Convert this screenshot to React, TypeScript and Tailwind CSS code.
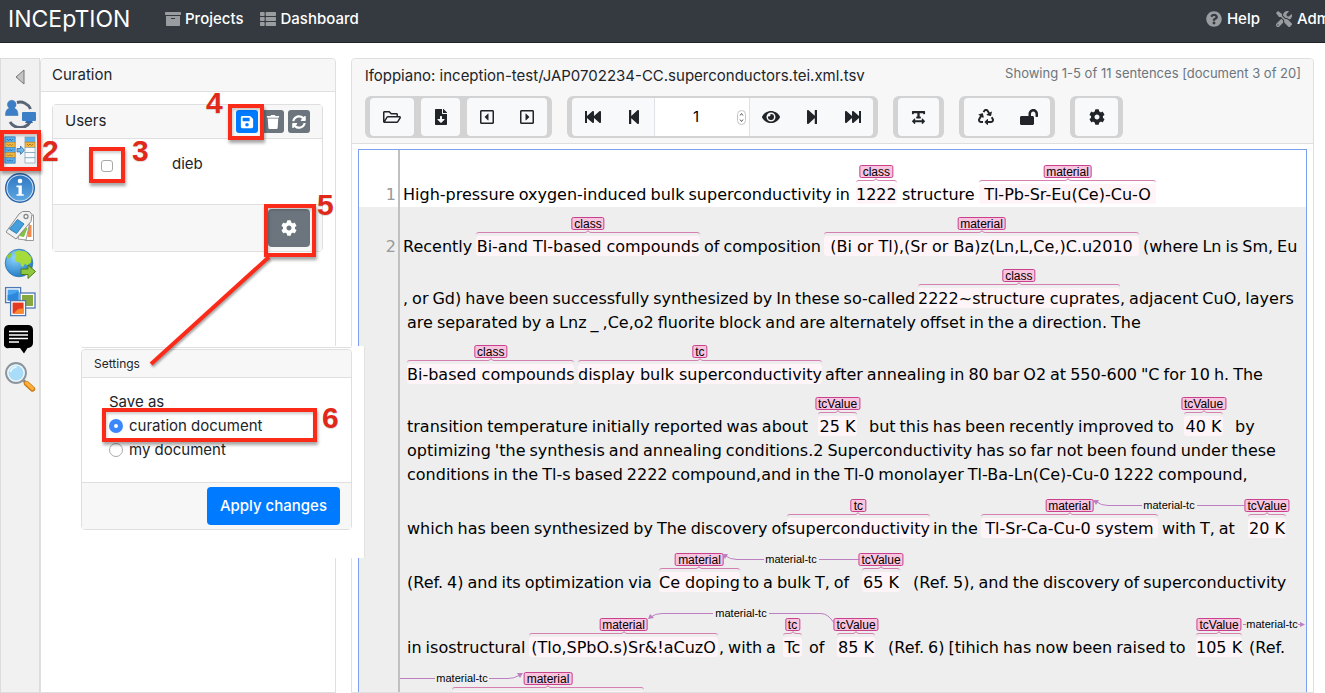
import React from 'react';
import {
  FaArchive, FaThList, FaQuestionCircle, FaTools, FaSave, FaTrash, FaSyncAlt, FaCog,
  FaRegFolderOpen, FaFileDownload, FaRegCaretSquareLeft, FaRegCaretSquareRight,
  FaFastBackward, FaStepBackward, FaEye, FaStepForward, FaFastForward,
  FaTextWidth, FaRecycle, FaLockOpen,
} from 'react-icons/fa';

/* ---------- annotated document ---------- */

type Segment = { x: number; text: string; tag?: string; width?: number };
type Arc = { line: string; head: string; labelX: number; y: number };
type Line = { height: number; number?: string; plain?: boolean; segments: Segment[]; arcs?: Arc[] };

const LINES: Line[] = [
  {
    height: 57, number: '1', plain: true,
    segments: [
      { x: 3, text: 'High-pressure oxygen-induced bulk superconductivity in' },
      { x: 456, text: '1222', tag: 'class' },
      { x: 502, text: 'structure' },
      { x: 579, text: 'Tl-Pb-Sr-Eu(Ce)-Cu-O', tag: 'material', width: 177 },
    ],
  },
  {
    height: 52, number: '2',
    segments: [
      { x: 3, text: 'Recently' },
      { x: 76, text: 'Bi-and Tl-based compounds', tag: 'class', width: 224 },
      { x: 304, text: 'of composition' },
      { x: 424, text: '(Bi or Tl),(Sr or Ba)z(Ln,L,Ce,)C.u2010', tag: 'material', width: 315 },
      { x: 743, text: '(where Ln is Sm, Eu' },
    ],
  },
  {
    height: 52,
    segments: [
      { x: 3, text: ', or Gd) have been successfully synthesized by In these so-called' },
      { x: 518, text: '2222~structure cuprates', tag: 'class' },
      { x: 720, text: ', adjacent CuO, layers' },
    ],
  },
  {
    height: 24,
    segments: [{ x: 7, text: 'are separated by a Lnz _ ,Ce,o2 fluorite block and are alternately offset in the a direction. The' }],
  },
  {
    height: 52,
    segments: [
      { x: 7, text: 'Bi-based compounds', tag: 'class' },
      { x: 178, text: 'display bulk superconductivity', tag: 'tc' },
      { x: 425, text: 'after annealing in 80 bar O2 at 550-600 "C for 10 h. The' },
    ],
  },
  {
    height: 52,
    segments: [
      { x: 7, text: 'transition temperature initially reported was about' },
      { x: 418, text: '25 K', tag: 'tcValue', width: 39 },
      { x: 469, text: 'but this has been recently improved to' },
      { x: 784, text: '40 K', tag: 'tcValue', width: 39 },
      { x: 835, text: 'by' },
    ],
  },
  {
    height: 24,
    segments: [{ x: 7, text: "optimizing 'the synthesis and annealing conditions.2 Superconductivity has so far not been found under these" }],
  },
  {
    height: 24,
    segments: [{ x: 7, text: 'conditions in the Tl-s based 2222 compound,and in the Tl-0 monolayer Tl-Ba-Ln(Ce)-Cu-0 1222 compound,' }],
  },
  {
    height: 54,
    segments: [
      { x: 7, text: 'which has been synthesized by The discovery of' },
      { x: 387, text: 'superconductivity', tag: 'tc' },
      { x: 533, text: 'in the' },
      { x: 581, text: 'Tl-Sr-Ca-Cu-0 system', tag: 'material', width: 177 },
      { x: 762, text: 'with T, at' },
      { x: 848, text: '20 K', tag: 'tcValue', width: 38 },
    ],
    arcs: [{ line: 'M845 18.5H797M742 18.5H708Q701 18.5 696 14.5', head: 'M693 13l6 0-3 5z', labelX: 769, y: 22 }],
  },
  {
    height: 54,
    segments: [
      { x: 7, text: '(Ref. 4) and its optimization via' },
      { x: 259, text: 'Ce doping', tag: 'material' },
      { x: 343, text: 'to a bulk T, of' },
      { x: 462, text: '65 K', tag: 'tcValue', width: 38 },
      { x: 513, text: '(Ref. 5), and the discovery of superconductivity' },
    ],
    arcs: [{ line: 'M460 18.5H419M364 18.5H337Q330 18.5 325 14.5', head: 'M322 13l6 0-3 5z', labelX: 391, y: 22 }],
  },
  {
    height: 65,
    segments: [
      { x: 7, text: 'in isostructural' },
      { x: 129, text: '(Tlo,SPbO.s)Sr&!aCuzO', tag: 'material', width: 189 },
      { x: 319, text: ', with a' },
      { x: 383, text: 'Tc', tag: 'tc', width: 19 },
      { x: 409, text: 'of' },
      { x: 437, text: '85 K', tag: 'tcValue', width: 38 },
      { x: 488, text: '(Ref. 6) [tihich has now been raised to' },
      { x: 796, text: '105 K', tag: 'tcValue' },
      { x: 849, text: '(Ref.' },
    ],
    arcs: [
      { line: 'M434 28Q428 18.5 421 18.5H369M313 18.5H262Q255 18.5 251 22', head: 'M248 24l2-5 4 4z', labelX: 341, y: 22 },
      { line: 'M843 29.5H846M898 29.5H900', head: 'M900 27l5 2.5-5 2.5z', labelX: 872, y: 33 },
    ],
  },
  {
    height: 54,
    segments: [{ x: 52, text: '', tag: 'material', width: 192 }],
    arcs: [{ line: 'M0 18.5H35M89 18.5H108Q114 18.5 119 15.5', head: 'M123 13l-6 0 3 5z', labelX: 62, y: 22 }],
  },
];

function Brace() {
  return (
    <span className="absolute inset-x-0 -top-[3px] flex h-[3px]">
      <span className="flex-1 rounded-tl-[3px] border-t border-[#d77fb0]" />
      <svg width="6" height="3" viewBox="0 0 6 3" className="-mt-[2px] shrink-0 overflow-visible" fill="none" stroke="#d77fb0">
        <path d="M0 2.5Q2.6 2.3 3 .5Q3.4 2.3 6 2.5" />
      </svg>
      <span className="flex-1 rounded-tr-[3px] border-t border-[#d77fb0]" />
    </span>
  );
}

function Annotation({ segment }: { segment: Segment }) {
  return (
    <span className="relative inline-block h-6 whitespace-nowrap text-center" style={segment.width ? { width: segment.width } : undefined}>
      <span className="absolute inset-x-0 top-px h-5 rounded-[3px] bg-[#fff4f8]" />
      <Brace />
      <span className="absolute -top-[18px] left-1/2 flex h-[13px] -translate-x-1/2 items-center rounded-[2px] border border-[#c9408c] bg-[#f9c4de] px-[2px] font-['Liberation_Sans',sans-serif] text-[12px] leading-none text-black">
        {segment.tag}
      </span>
      <span className="relative">{segment.text}</span>
    </span>
  );
}

function DocumentLine({ line }: { line: Line }) {
  return (
    <div className={line.plain ? 'flex bg-white' : 'flex bg-[#eeeeee]'} style={{ height: line.height }}>
      <div className="flex w-[41px] shrink-0 items-end justify-end border-r-2 border-[#c0c0c0] pr-[2px] leading-6 text-[#999999]">
        {line.number}
      </div>
      <div className="relative flex flex-1 items-end whitespace-nowrap leading-6" style={{ paddingLeft: line.segments[0].x }}>
        {line.segments.map((s, i) => {
          const next = line.segments[i + 1];
          return (
            <div key={i} className="flex h-6 shrink-0 gap-1" style={next ? { width: next.x - s.x } : undefined}>
              {s.tag ? <Annotation segment={s} /> : s.text.split(' ').map((w, j) => <span key={j}>{w + ' '}</span>)}
            </div>
          );
        })}
        {line.arcs && (
          <svg className="absolute inset-0 h-full w-full overflow-visible">
            {line.arcs.map((a, i) => (
              <g key={i}>
                <path d={a.line} fill="none" stroke="#bb7fc2" />
                <path d={a.head} fill="#bb7fc2" />
                <text x={a.labelX} y={a.y} textAnchor="middle" className="font-['Liberation_Sans',sans-serif] text-[11px]" fill="#000">
                  material-tc
                </text>
              </g>
            ))}
          </svg>
        )}
      </div>
    </div>
  );
}

/* ---------- side bar icons ---------- */

const svgProps = { width: 32, height: 32, viewBox: '0 0 32 32' };

const UsersIcon = () => (
  <svg {...svgProps}>
    <path d="M13 6.500A11.500 11.500 0 0 1 26.500 13M26.500 25.500A12 12 0 0 1 6 26" fill="none" stroke="#596575" strokeWidth="3" />
    <path d="M1.500 19.500c0-5 1.500-6.500 4-7.300a4.300 4.300 0 1 1 4.500 0c2.500.8 4 2.300 4 7.300z" fill="#3d7fc6" stroke="#2f69a8" strokeWidth=".5" />
    <rect x="18" y="16" width="14" height="9" rx="1" fill="#3d7fc6" />
    <path d="M22 25h6l1 2h-8z" fill="#2f69a8" />
  </svg>
);

const CurationIcon = () => (
  <svg {...svgProps}>
    <rect x="1" y="3" width="10" height="26" fill="#fff" stroke="#4e8fc4" />
    {[3, 8.2, 13.400, 18.600, 23.800].map((y, i) => (
      <g key={i}>
        <rect x="1" y={y} width="10" height="5.200" fill={i % 2 ? '#f3b63f' : '#5bb0ee'} stroke={i % 2 ? '#b8862b' : '#3b7fb8'} strokeWidth=".6" />
        <path d={`M3 ${y + 2}l1.500 1.500 1.500-1.500 1.500 1.500 1.500-1.500`} fill="none" stroke={i % 2 ? '#936c22' : '#1f5f99'} strokeWidth=".8" />
      </g>
    ))}
    <path d="M13 14.500h3.500v-2.500l4 4.200-4 4.200v-2.500H13z" fill="#6db7ea" stroke="#2f6da6" strokeWidth=".8" />
    {[3, 8.2, 13.400, 18.600, 23.800].map((y, i) => (
      <rect key={i} x="21" y={y} width="10" height="5.200" fill={i === 0 ? '#5bb0ee' : i === 1 ? '#f3b63f' : '#f7fbff'} stroke={i === 1 ? '#b8862b' : '#7ea0b8'} strokeWidth=".7" />
    ))}
    <path d="M23 10l1.500 1.500 1.500-1.500 1.500 1.500 1.500-1.500" fill="none" stroke="#936c22" strokeWidth=".8" />
  </svg>
);

const InfoIcon = () => (
  <svg {...svgProps}>
    <defs>
      <linearGradient id="info" x1="0" y1="0" x2="0" y2="1">
        <stop offset="0" stopColor="#2f78c2" />
        <stop offset="1" stopColor="#5ea6e2" />
      </linearGradient>
    </defs>
    <circle cx="16" cy="16" r="14.300" fill="#dceaf7" stroke="#2461a6" strokeWidth="1.400" />
    <circle cx="16" cy="16" r="12.600" fill="url(#info)" />
    <circle cx="16" cy="9" r="2.300" fill="#fff" />
    <path d="M12.500 13.500h5.300v8.700h2v1.600h-7.300v-1.600h2v-7h-2z" fill="#fff" />
  </svg>
);

const TagsIcon = () => (
  <svg {...svgProps}>
    <path d="M23 5h6.500v25.500H21z" fill="#fff" stroke="#999" />
    <path d="M24.500 15h3v12h-4z" fill="#f28a4a" />
    <path d="M20 5l7 2-5 23-8-1z" fill="#fff" stroke="#999" />
    <path d="M18 17l5.500 1-3.500 9-5-1z" fill="#7fc242" />
    <path d="M18.500 1.500h7l2.500 3-1 7L12 29 2 22 15 4z" fill="#f0f0f0" stroke="#8c8c8c" strokeLinejoin="round" />
    <path d="M13.500 9.500l6.500 4.500-7.500 9.500-7-4.500z" fill="#43a0dc" stroke="#2e7fb6" />
    <circle cx="22" cy="6.500" r="2" fill="#fff" stroke="#888" strokeWidth="1.300" />
  </svg>
);

const GlobeIcon = () => (
  <svg {...svgProps}>
    <defs>
      <radialGradient id="globe" cx=".35" cy=".3" r=".8">
        <stop offset="0" stopColor="#8fd6ff" />
        <stop offset="1" stopColor="#1871bf" />
      </radialGradient>
    </defs>
    <circle cx="15" cy="15" r="13.800" fill="url(#globe)" stroke="#2a72ab" strokeWidth=".8" />
    <path d="M10 5l4-2.500 8 1 5.500 6-.5 5-4 3-2-2-2 3.500-2-1.500-1-3-4-1-1.500-3.500 2-2z" fill="#a5dc3c" />
    <path d="M3 8l3-3 2 1-2 4-3 1z" fill="#8ccc30" />
    <path d="M17 21h7v-4l7.500 6.500L24 30.500v-4h-7z" fill="#8fc73e" stroke="#4c7d15" />
  </svg>
);

const ImagesIcon = () => (
  <svg {...svgProps}>
    <g strokeWidth="1.300" stroke="#4d78b3" fill="#fff">
      <rect x="1.600" y="1.600" width="15" height="15" />
      <rect x="16" y="7" width="15" height="15" />
    </g>
    <rect x="3.600" y="3.600" width="11" height="11" fill="#4aa3ee" />
    <path d="M3.600 9q6 0 11-4v9.600h-11z" fill="#2d87dc" />
    <rect x="18" y="9" width="11" height="11" fill="#86a83c" />
    <rect x="6.600" y="14.600" width="15" height="15" fill="#fff" stroke="#4d78b3" strokeWidth="1.300" />
    <rect x="8.600" y="16.600" width="11" height="11" fill="#e53a22" />
    <path d="M10 27.600q3-6 9.600-5v5z" fill="#fb8a2c" />
  </svg>
);

const CommentIcon = () => (
  <svg {...svgProps}>
    <path d="M4.500 1h20a5 5 0 0 1 4.500 5v13a5 5 0 0 1-5 5h-.5l-3.500 5.500-4-5.500H5a4 4 0 0 1-5-5V6a5 5 0 0 1 4.500-5z" fill="#000" />
    <path d="M5 7.500h19M5 11h19M5 14.500h19M5 18h10" stroke="#fff" strokeWidth="1.500" />
  </svg>
);

const SearchIcon = () => (
  <svg {...svgProps} viewBox="0 1 32 32">
    <path d="M19.500 19.500l3 3" stroke="#8a8a8a" strokeWidth="3" />
    <path d="M22.500 22.500l6 5.500" stroke="#c97a12" strokeWidth="5.400" strokeLinecap="round" />
    <path d="M22.500 22l6 5.500" stroke="#fbb03c" strokeWidth="3.200" strokeLinecap="round" />
    <circle cx="12" cy="12" r="9.800" fill="#a9dcf8" stroke="#8c959c" strokeWidth="2.200" />
    <circle cx="12" cy="12" r="8.200" fill="none" stroke="#f4f8fb" strokeWidth="1.300" />
    <path d="M6.500 11a6 6 0 0 1 6-5" fill="none" stroke="#e8f7ff" strokeWidth="2" />
  </svg>
);

const SIDE_ICONS: [string, React.FC][] = [
  ['Users', UsersIcon], ['Curation', CurationIcon], ['Info', InfoIcon], ['Layers', TagsIcon],
  ['Export', GlobeIcon], ['Images', ImagesIcon], ['Comments', CommentIcon], ['Search', SearchIcon],
];

/* ---------- toolbar ---------- */

function ToolGroup({ children }: { children: React.ReactNode }) {
  return <div className="flex h-[42px] gap-[7px] rounded-md bg-[#d3d3d3] px-[5px] py-[2px]">{children}</div>;
}

function ToolSet({ children }: { children: React.ReactNode }) {
  return <div className="flex overflow-hidden rounded bg-[#f8f9fa]">{children}</div>;
}

function Tool({ label, width = 'w-[41px]', children }: { label: string; width?: string; children: React.ReactNode }) {
  return (
    <button type="button" aria-label={label} className={`flex ${width} items-center justify-center text-[16px] text-[#212529]`}>
      {children}
    </button>
  );
}

function Toolbar() {
  return (
    <div className="mt-2 flex gap-[15px]">
      <ToolGroup>
        <ToolSet><Tool label="Open document" width="w-11"><FaRegFolderOpen size={18} /></Tool></ToolSet>
        <ToolSet><Tool label="Export" width="w-[39px]"><FaFileDownload /></Tool></ToolSet>
        <ToolSet>
          <Tool label="Previous document" width="w-10"><FaRegCaretSquareLeft /></Tool>
          <Tool label="Next document" width="w-10"><FaRegCaretSquareRight /></Tool>
        </ToolSet>
      </ToolGroup>
      <ToolGroup>
        <ToolSet>
          <Tool label="First"><FaFastBackward /></Tool>
          <Tool label="Previous"><FaStepBackward /></Tool>
          <div className="flex w-[96px] items-center border-x border-[#dee2e6] bg-white">
            <input aria-label="Sentence" defaultValue="1" className="w-[82px] bg-transparent text-center text-[15px] text-black outline-none" />
            <svg width="9" height="15" viewBox="0 0 9 15" fill="none" stroke="#555">
              <rect x=".5" y=".5" width="8" height="14" rx="4" stroke="#c4c4c4" />
              <path d="M3 5.500L4.500 3.500 6 5.500M3 9.500L4.500 11.500 6 9.500" />
            </svg>
          </div>
          <Tool label="Show"><FaEye size={18} /></Tool>
          <Tool label="Next"><FaStepForward /></Tool>
          <Tool label="Last"><FaFastForward /></Tool>
        </ToolSet>
      </ToolGroup>
      <ToolGroup><ToolSet><Tool label="Text direction"><FaTextWidth size={15} /></Tool></ToolSet></ToolGroup>
      <ToolGroup>
        <ToolSet>
          <Tool label="Reset" width="w-[43px]"><FaRecycle /></Tool>
          <Tool label="Unlock" width="w-[43px]"><FaLockOpen size={18} /></Tool>
        </ToolSet>
      </ToolGroup>
      <ToolGroup><ToolSet><Tool label="Preferences" width="w-[43px]"><FaCog /></Tool></ToolSet></ToolGroup>
    </div>
  );
}

/* ---------- panels ---------- */

function CurationPanel() {
  return (
    <section className="w-[296px] shrink-0 rounded-t border border-[#dfdfdf] bg-white">
      <h2 className="flex h-[33px] items-center rounded-t border-b border-[#dfdfdf] bg-[#f7f7f7] px-[11px] pt-px text-[15px]">Curation</h2>
      <div className="ml-[11px] mr-3 mt-3 rounded border border-[#dfdfdf]">
        <div className="flex h-[34px] items-center gap-1 border-b border-[#dfdfdf] bg-[#f7f7f7] pl-3 pr-3 text-white">
          <h3 className="flex-1 text-[15px] text-[#212529]">Users</h3>
          <button type="button" aria-label="Save" className="flex h-[23px] w-[22px] items-center justify-center rounded-[3px] bg-[#007bff]"><FaSave size={14} /></button>
          <button type="button" aria-label="Delete" className="flex h-[23px] w-[22px] items-center justify-center rounded-[3px] bg-[#6c757d]"><FaTrash size={14} /></button>
          <button type="button" aria-label="Refresh" className="flex h-[23px] w-[22px] items-center justify-center rounded-[3px] bg-[#6c757d]"><FaSyncAlt size={14} /></button>
        </div>
        <label className="flex h-[65px] items-start gap-[59px] pl-12 pt-[13px] text-[15px]">
          <input type="checkbox" className="mt-2 size-3 appearance-none rounded-[3px] border border-[#a8a8a8] bg-white" />
          <span className="leading-6">dieb</span>
        </label>
        <div className="flex h-[47px] items-center justify-end border-t border-[#dfdfdf] bg-[#f7f7f7] pr-3">
          <button type="button" aria-label="Settings" className="flex h-[38px] w-[42px] items-center justify-center rounded bg-[#6c757d] text-white"><FaCog size={16} /></button>
        </div>
      </div>
    </section>
  );
}

function SettingsPopup() {
  return (
    <div className="absolute left-[81px] top-[346px] h-[212px] w-[284px] border-r border-[#e2e2e2] bg-white">
      <div className="h-[2px] w-[271px] rounded-b-[3px] border-b border-[#dfdfdf]" />
      <section className="mt-px w-[271px] rounded border border-[#dfdfdf]">
        <h3 className="flex h-7 items-center rounded-t border-b border-[#dfdfdf] bg-[#f7f7f7] px-3 pt-px text-[12px]">Settings</h3>
        <div role="radiogroup" aria-labelledby="save-as" className="flex h-[104px] flex-col pl-[27px] pt-3 text-[15px] leading-6">
          <span id="save-as">Save as</span>
          <label className="flex items-center gap-[6px]">
            <input type="radio" name="target" defaultChecked className="size-[14px] appearance-none rounded-full border border-[#aaa] bg-white checked:border-[5px] checked:border-[#3b88fd]" />
            curation document
          </label>
          <label className="flex items-center gap-[6px]">
            <input type="radio" name="target" className="size-[14px] appearance-none rounded-full border border-[#aaa] bg-white checked:border-[5px] checked:border-[#3b88fd]" />
            my document
          </label>
        </div>
        <div className="flex h-[47px] items-center justify-end border-t border-[#dfdfdf] bg-[#f7f7f7] pr-[11px]">
          <button type="button" className="h-[38px] rounded bg-[#007bff] px-[13px] text-[15px] font-medium text-white">Apply changes</button>
        </div>
      </section>
    </div>
  );
}

function Callouts() {
  const box = 'absolute border-4 border-[#fb2b1a] shadow-[1px_3px_3px_rgba(0,0,0,0.35),inset_1px_2px_3px_rgba(0,0,0,0.2)]';
  const num = "absolute font-['Liberation_Sans',sans-serif] text-[30px] font-bold leading-none text-[#e0291b] [text-shadow:0_1px_1px_rgba(0,0,0,0.15)]";
  return (
    <div className="pointer-events-none absolute inset-0">
      <div className={`${box} left-0 top-[130px] h-[41px] w-[41px]`} />
      <div className={`${box} left-[89px] top-[147px] h-[36px] w-[36px]`} />
      <div className={`${box} left-[228px] top-[104px] h-[36px] w-[36px]`} />
      <div className={`${box} left-[264px] top-[204px] h-[53px] w-[52px]`} />
      <div className={`${box} left-[102px] top-[408px] h-[34px] w-[215px]`} />
      <svg className="absolute inset-0 h-full w-full drop-shadow-[1px_2px_1px_rgba(0,0,0,0.35)]">
        <path d="M269 257L151 364" stroke="#fb2b1a" strokeWidth="4" />
      </svg>
      <span className={`${num} left-[42px] top-[136px]`}>2</span>
      <span className={`${num} left-[132px] top-[136px]`}>3</span>
      <span className={`${num} left-[206px] top-[88px]`}>4</span>
      <span className={`${num} left-[317px] top-[190px]`}>5</span>
      <span className={`${num} left-[322px] top-[403px]`}>6</span>
    </div>
  );
}

export default function App() {
  return (
    <div className="relative flex h-screen flex-col overflow-hidden bg-white font-[Inter,sans-serif] text-[#212529]">
      <header className="flex h-[43px] shrink-0 items-center overflow-hidden whitespace-nowrap border-b border-[#1f2327] bg-[#343a40] pb-[4px] pl-2 text-[15px] font-medium text-white">
        <a href="#" className="w-[157px] shrink-0 text-[23px] font-normal">INCEpTION</a>
        <nav className="flex flex-1 gap-4">
          <a href="#" className="flex items-center gap-1"><FaArchive size={16} className="text-[#9a9da0]" />Projects</a>
          <a href="#" className="flex items-center gap-[5px]"><FaThList size={16} className="text-[#9a9da0]" />Dashboard</a>
        </nav>
        <nav className="-mr-[72px] flex shrink-0 gap-4">
          <a href="#" className="flex items-center gap-[5px]"><FaQuestionCircle size={16} className="text-[#9a9da0]" />Help</a>
          <a href="#" className="flex w-[121px] items-center gap-[5px]"><FaTools size={16} className="shrink-0 text-[#9a9da0]" />Administration</a>
        </nav>
      </header>
      <div className="flex min-h-0 flex-1 pr-[11px] pt-[15px]">
        <aside className="flex w-10 shrink-0 flex-col items-center border border-[#dcdcdc] bg-[#f1f1f1]">
          <button type="button" aria-label="Collapse" className="flex h-9 w-full items-center justify-center">
            <svg width="10" height="16" viewBox="0 0 10 16"><path d="M9 1v14L1 8z" fill="#c4c4c4" stroke="#777" strokeLinejoin="round" /></svg>
          </button>
          <div className="flex flex-col gap-[6px] pt-px">
            {SIDE_ICONS.map(([name, Icon]) => (
              <button key={name} type="button" aria-label={name} className="size-8"><Icon /></button>
            ))}
          </div>
        </aside>
        <CurationPanel />
        <main className="ml-[15px] flex min-w-0 flex-1 flex-col rounded-t border border-[#dfdfdf] bg-white">
          <div className="h-[85px] shrink-0 rounded-t border-b border-[#dfdfdf] bg-[#f7f7f7] pl-[13px] pr-3 pt-1">
            <div className="flex h-[25px] justify-between whitespace-nowrap">
              <h1 className="text-[15px] leading-[25px]">lfoppiano: inception-test/JAP0702234-CC.superconductors.tei.xml.tsv</h1>
              <span className="text-[13px] leading-5 text-[#6c757d]">Showing 1-5 of 11 sentences [document 3 of 20]</span>
            </div>
            <Toolbar />
          </div>
          <div className="min-h-0 flex-1 overflow-hidden px-[6px] pt-[5px]">
            <div className="overflow-hidden border border-[#7d9ff0] font-['DejaVu_Sans',sans-serif] text-[16px] text-black">
              {LINES.map((line, i) => <DocumentLine key={i} line={line} />)}
            </div>
          </div>
        </main>
      </div>
      <SettingsPopup />
      <Callouts />
    </div>
  );
}
